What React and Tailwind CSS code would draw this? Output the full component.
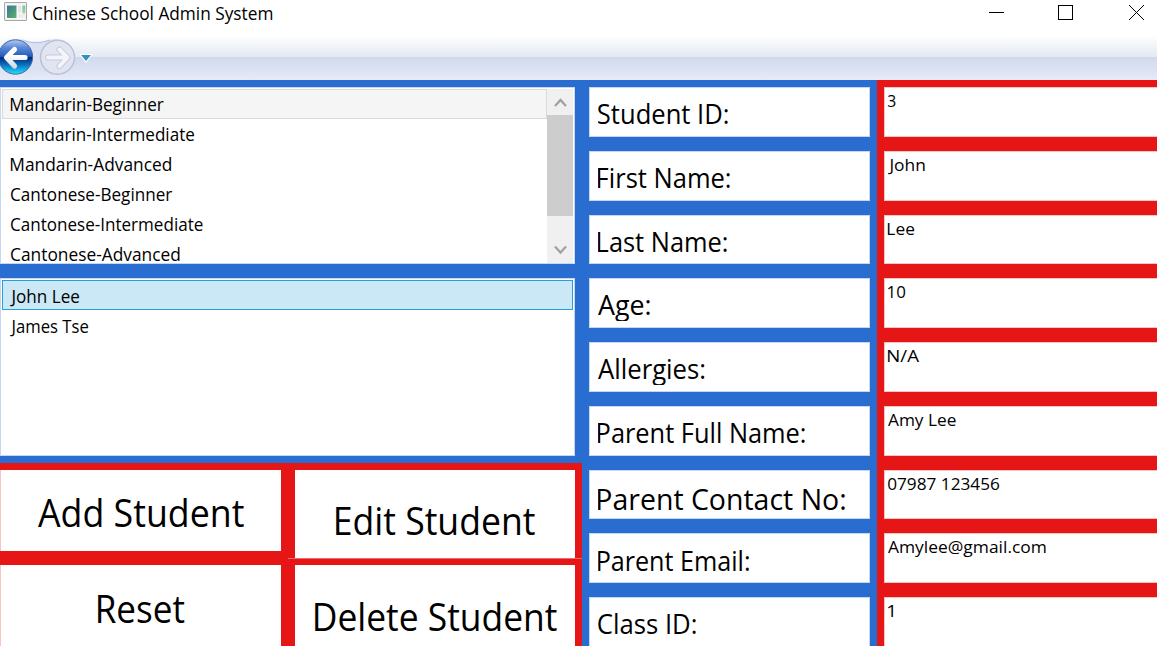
import { useLayoutEffect, useRef, useState } from "react";

// Condenses a line of text so that its drawn glyphs span exactly `width` pixels.
// Metrics are taken at ten times the size, so that they are not rounded to whole pixels.
function Fit({ children, width, className = "" }) {
  const ref = useRef(null);
  const [style, setStyle] = useState({});
  useLayoutEffect(() => {
    const cs = getComputedStyle(ref.current);
    const ctx = document.createElement("canvas").getContext("2d");
    ctx.font = `${cs.fontWeight} ${parseFloat(cs.fontSize) * 10}px ${cs.fontFamily}`;
    const m = ctx.measureText(children);
    const left = m.actualBoundingBoxLeft / 10;
    const s = width / (m.actualBoundingBoxRight / 10 + left);
    setStyle({ transform: `translateX(${left * s}px) scaleX(${s})` });
  }, [children, width]);
  return (
    <span ref={ref} style={style} className={`block w-max origin-left whitespace-nowrap ${className}`}>
      {children}
    </span>
  );
}

const classes = [
  ["Mandarin-Beginner", 152.5],
  ["Mandarin-Intermediate", 183],
  ["Mandarin-Advanced", 160],
  ["Cantonese-Beginner", 161],
  ["Cantonese-Intermediate", 191.5],
  ["Cantonese-Advanced", 168.5],
];

const fields = [
  { label: "Student ID:", lw: 130, value: "3", vw: 7.5, row: "h-[50px] mb-[14px]" },
  { label: "First Name:", lw: 132, value: "John", vw: 36.5, row: "h-[50px] mb-[14px]" },
  { label: "Last Name:", lw: 129, value: "Lee", vw: 26, row: "h-[49px] mb-[14px]" },
  { label: "Age:", lw: 52, value: "10", vw: 17, row: "h-[50px] mb-[14px]" },
  { label: "Allergies:", lw: 106.5, value: "N/A", vw: 31, row: "h-[50px] mb-[14px]" },
  { label: "Parent Full Name:", lw: 207, value: "Amy Lee", vw: 67.5, row: "h-[50px] mb-[14px]" },
  { label: "Parent Contact No:", lw: 247, value: "07987 123456", vw: 111, row: "h-[49px] mb-[14px]", text: "pt-[15px] text-[28.5px] leading-[26px]" },
  { label: "Parent Email:", lw: 151, value: "Amylee@gmail.com", vw: 157.5, row: "h-[50px] mb-[14px]", text: "pt-[13px] text-[26.5px] leading-[28px]" },
  { label: "Class ID:", lw: 98, value: "1", vw: 5, row: "h-[50px]" },
];

function TitleBar() {
  return (
    <header className="flex h-7 shrink-0 items-start bg-white">
      <svg className="ml-1 mt-[2px] h-[20px] w-[24px]" viewBox="0 0 24 20">
        <defs>
          <linearGradient id="app" x1="0" y1="0" x2="1" y2="1">
            <stop offset="0" stopColor="#3a7796" />
            <stop offset="1" stopColor="#5cb26a" />
          </linearGradient>
          <linearGradient id="side" x1="0" y1="0" x2="0" y2="1">
            <stop offset="0" stopColor="#7fc4a0" />
            <stop offset="1" stopColor="#a3d4a0" />
          </linearGradient>
        </defs>
        <rect x="0.5" y="0.5" width="22" height="18" rx="0.5" fill="#f1f1f1" stroke="#a8a8a8" />
        <rect x="2" y="2.500" width="19" height="14.500" fill="#fbfbfb" />
        <rect x="3" y="3.500" width="9.500" height="12.500" fill="url(#app)" />
        <rect x="14" y="3.500" width="3.200" height="7" fill="#e4e6e6" />
        <rect x="18.300" y="3.500" width="3" height="8" fill="url(#side)" />
        <rect x="14" y="11.500" width="7.300" height="4.500" fill="#eeeeee" />
      </svg>
      <div className="ml-[5px] text-[17.5px] leading-[26px]">
        <Fit width={239}>Chinese School Admin System</Fit>
      </div>
      <svg className="ml-auto h-[26px] w-[197px]" viewBox="0 0 197 26" fill="none" stroke="#000" shapeRendering="crispEdges">
        <path d="M29 12.5H44" />
        <rect x="98.5" y="5.5" width="14" height="14" />
        <path d="M169 5L184 20M184 5L169 20" shapeRendering="auto" />
      </svg>
    </header>
  );
}

function NavBar() {
  return (
    <nav className="h-[52px] shrink-0">
      <svg className="block h-[52px] w-full" viewBox="0 28 1157 52">
        <defs>
          <linearGradient id="high" x1="0" y1="0" x2="0" y2="1">
            <stop offset="0.25" stopColor="#fff" />
            <stop offset="1" stopColor="#e3e8f2" />
          </linearGradient>
          <linearGradient id="low" x1="0" y1="0" x2="0" y2="1">
            <stop offset="0" stopColor="#d0d9ec" />
            <stop offset="1" stopColor="#e7eaf8" />
          </linearGradient>
          <linearGradient id="back" x1="0" y1="0" x2="0" y2="1">
            <stop offset="0" stopColor="#b4cbf0" />
            <stop offset="0.22" stopColor="#5c8cd8" />
            <stop offset="0.49" stopColor="#1f57ba" />
            <stop offset="0.5" stopColor="#022474" />
            <stop offset="0.75" stopColor="#0b7ac8" />
            <stop offset="1" stopColor="#25e4fb" />
          </linearGradient>
          <linearGradient id="arrow" gradientUnits="userSpaceOnUse" x1="0" y1="47" x2="0" y2="68">
            <stop offset="0.4" stopColor="#fff" />
            <stop offset="1" stopColor="#d3d8e3" />
          </linearGradient>
        </defs>
        <rect x="0" y="28" width="1157" height="29" fill="url(#high)" />
        <rect x="0" y="57" width="1157" height="23" fill="url(#low)" />
        <path d="M15 39C26 39 28 42.500 36 42.500S47 39 57 39V75C47 75 45 70 36 70S26 75 15 75Z" fill="#dce1f2" />
        <path d="M22 40C28 42 30 42.500 36 42.500S45 41.500 50 40" fill="none" stroke="#b0bde2" />
        <circle cx="15.500" cy="57" r="18.300" fill="#e6ebf6" />
        <circle cx="15.500" cy="57" r="17.200" fill="url(#back)" stroke="#4468a8" />
        <path
          d="M14.500 49.500L6.500 57.500L14.500 66M7.500 57.500H25"
          fill="none"
          stroke="url(#arrow)"
          strokeWidth="5.200"
          strokeLinecap="round"
          strokeLinejoin="round"
        />
        <circle cx="57.500" cy="57.300" r="17" fill="#e1e5f1" stroke="#bcc1d6" strokeWidth="1.500" />
        <g fill="none" strokeLinecap="round" strokeLinejoin="round">
          <path d="M59.500 49.500L67.500 57.500L59.500 66M66 57.500H48" stroke="#c6cadb" strokeWidth="6" />
          <path d="M59.500 49.500L67.500 57.500L59.500 66M66 57.500H48" stroke="#f4f5fa" strokeWidth="4" />
        </g>
        <path d="M79 54H93L86 63Z" fill="#fff" />
        <path d="M81 55H91L86 61Z" fill="#2f93bd" />
      </svg>
    </nav>
  );
}

function ScrollBar() {
  return (
    <div className="flex w-[26px] flex-col justify-between bg-[#f0f0f0]">
      <svg className="h-[26px] w-[26px]" viewBox="0 0 26 26" fill="none" stroke="#a0a0a0" strokeWidth="2.200">
        <path d="M8 17L13.500 11L19 17" />
      </svg>
      <div className="h-[101px] bg-[#cdcdcd]" />
      <div className="h-[21px]" />
      <svg className="h-[25px] w-[26px]" viewBox="0 0 26 25" fill="none" stroke="#a0a0a0" strokeWidth="2.200">
        <path d="M8 8.500L13.500 14.500L19 8.500" />
      </svg>
    </div>
  );
}

function ActionButton({ children, width, className }) {
  return (
    <button className={`block bg-white text-left text-[37.5px] ${className}`}>
      <Fit width={width}>{children}</Fit>
    </button>
  );
}

export default function App() {
  return (
    <div className="flex h-[646px] w-[1157px] flex-col overflow-hidden bg-white font-['Open_Sans','Noto_Sans',sans-serif] text-black">
      <TitleBar />
      <NavBar />
      <main className="flex h-[566px] bg-[#286dcf]">
        <section className="flex w-[582px] flex-col">
          <div className="mt-[7px] flex h-[177px] w-[575px] overflow-hidden border border-[#c5d7f2] bg-white pl-px pr-px pt-px">
            <ul className="w-[545px] text-[17.5px] leading-[30px]">
              {classes.map(([name, w], i) => (
                <li
                  key={name}
                  className={
                    i === 0
                      ? "h-[30px] border border-[#dadada] bg-[#f5f5f5] pl-[7.5px] leading-[29px]"
                      : "h-[30px] pl-[8.5px] leading-[31px]"
                  }
                >
                  <Fit width={w}>{name}</Fit>
                </li>
              ))}
            </ul>
            <ScrollBar />
          </div>
          <ul className="mt-[14px] h-[178px] w-[575px] border border-[#c5d7f2] bg-white px-px pt-px text-[17.5px]">
            <li className="h-[30px] border border-[#26a0da] bg-[#cbe8f6] pl-[6.5px] leading-[31px]">
              <Fit width={69}>John Lee</Fit>
            </li>
            <li className="h-[30px] pl-[7.5px] leading-[33px]">
              <Fit width={78}>James Tse</Fit>
            </li>
          </ul>
          <div className="mt-[7px] flex h-[183px] gap-[14px] bg-[#e71616] pt-[7px]">
            <div className="flex w-[281px] flex-col gap-[14px]">
              <ActionButton width={206} className="h-[81px] border-l border-[#fbc4c4] pl-[36.5px] leading-[85px]">
                Add Student
              </ActionButton>
              <ActionButton width={86.5} className="h-[81px] border-l border-[#fbc4c4] pl-[97px] leading-[87px]">
                Reset
              </ActionButton>
            </div>
            <div className="flex w-[287px] flex-col">
              <ActionButton width={199} className="h-[88px] w-[280px] pl-[41px] leading-[101px]">
                Edit Student
              </ActionButton>
              <div className="-ml-[7px] h-px bg-[#ee6a6a]" />
              <ActionButton width={242} className="mt-[6px] h-[81px] w-[280px] pl-[20px] leading-[103px]">
                Delete Student
              </ActionButton>
            </div>
          </div>
        </section>
        <section className="w-[295px] px-[7px] pt-[7px]">
          {fields.map((f) => (
            <div key={f.label} className={`w-[281px] border border-[#c5d7f2] bg-white pl-[8px] ${f.row}`}>
              <div className={`h-[42px] overflow-hidden ${f.text || "pt-[11px] text-[26.5px] leading-[31px]"}`}>
                <Fit width={f.lw}>{f.label}</Fit>
              </div>
            </div>
          ))}
        </section>
        <section className="w-[280px] bg-[#e71616] pl-[7px] pt-[7px]">
          {fields.map((f) => (
            <div key={f.label} className={`border-y border-l border-[#fbc4c4] bg-white pl-[2.5px] text-[17px] leading-[25px] ${f.row}`}>
              <Fit width={f.vw}>{f.value}</Fit>
            </div>
          ))}
        </section>
      </main>
    </div>
  );
}
